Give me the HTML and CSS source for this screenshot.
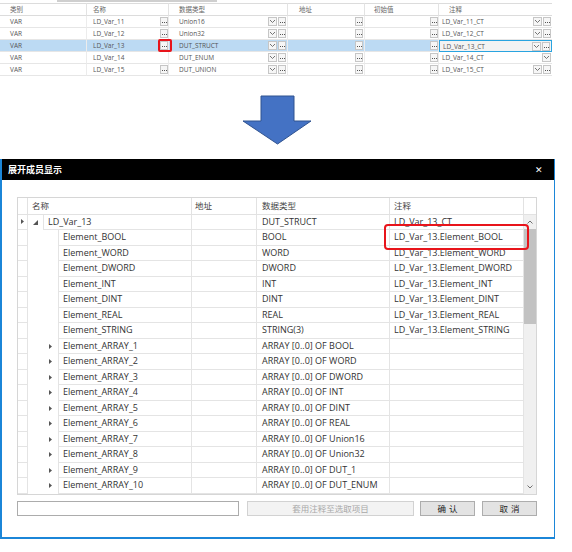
FILE: index.html
```html
<!DOCTYPE html>
<html lang="zh-CN">
<head>
<meta charset="utf-8">
<title>展开成员显示</title>
<link rel="stylesheet" href="styles.css">
</head>
<body>
<div class="hbar"></div>
<div class="tt">
  <div class="th p10">类别</div>
  <div class="th p6">名称</div>
  <div class="th p10">数据类型</div>
  <div class="th p11">地址</div>
  <div class="th p9">初始值</div>
  <div class="th p10 last">注释</div>

  <div class="td p10">VAR</div>
  <div class="td p6"><span class="tx">LD_Var_11</span><span class="dots r0"><i></i><i></i><i></i></span></div>
  <div class="td p10"><span class="tx">Union16</span><span class="dd"><svg width="5" height="3" viewBox="0 0 5 3"><polyline points="0,0 2.5,2.5 5,0"/></svg></span><span class="dots r1"><i></i><i></i><i></i></span></div>
  <div class="td"><span class="dots r1"><i></i><i></i><i></i></span></div>
  <div class="td"><span class="dots r0"><i></i><i></i><i></i></span></div>
  <div class="td p3 last"><span class="tx">LD_Var_11_CT</span><span class="dd"><svg width="5" height="3" viewBox="0 0 5 3"><polyline points="0,0 2.5,2.5 5,0"/></svg></span><span class="dots r1"><i></i><i></i><i></i></span></div>

  <div class="td p10">VAR</div>
  <div class="td p6"><span class="tx">LD_Var_12</span><span class="dots r0"><i></i><i></i><i></i></span></div>
  <div class="td p10"><span class="tx">Union32</span><span class="dd"><svg width="5" height="3" viewBox="0 0 5 3"><polyline points="0,0 2.5,2.5 5,0"/></svg></span><span class="dots r1"><i></i><i></i><i></i></span></div>
  <div class="td"><span class="dots r1"><i></i><i></i><i></i></span></div>
  <div class="td"><span class="dots r0"><i></i><i></i><i></i></span></div>
  <div class="td p3 last"><span class="tx">LD_Var_12_CT</span><span class="dd"><svg width="5" height="3" viewBox="0 0 5 3"><polyline points="0,0 2.5,2.5 5,0"/></svg></span><span class="dots r1"><i></i><i></i><i></i></span></div>

  <div class="td sel p10">VAR</div>
  <div class="td sel p6 rel"><span class="tx">LD_Var_13</span><span class="dots r0"><i></i><i></i><i></i></span><span class="redmark"></span></div>
  <div class="td sel p10"><span class="tx">DUT_STRUCT</span><span class="dd"><svg width="5" height="3" viewBox="0 0 5 3"><polyline points="0,0 2.5,2.5 5,0"/></svg></span><span class="dots r1"><i></i><i></i><i></i></span></div>
  <div class="td sel"><span class="dots r1"><i></i><i></i><i></i></span></div>
  <div class="td sel"><span class="dots r0"><i></i><i></i><i></i></span></div>
  <div class="td p3 last focus"><span class="tx">LD_Var_13_CT</span><span class="dd"><svg width="5" height="3" viewBox="0 0 5 3"><polyline points="0,0 2.5,2.5 5,0"/></svg></span><span class="dots r1"><i></i><i></i><i></i></span></div>

  <div class="td p10">VAR</div>
  <div class="td p6"><span class="tx">LD_Var_14</span></div>
  <div class="td p10"><span class="tx">DUT_ENUM</span><span class="dd"><svg width="5" height="3" viewBox="0 0 5 3"><polyline points="0,0 2.5,2.5 5,0"/></svg></span><span class="dots r1"><i></i><i></i><i></i></span></div>
  <div class="td"><span class="dots r1"><i></i><i></i><i></i></span></div>
  <div class="td"><span class="dots r0"><i></i><i></i><i></i></span></div>
  <div class="td p3 last"><span class="tx">LD_Var_14_CT</span><span class="dd r1"><svg width="5" height="3" viewBox="0 0 5 3"><polyline points="0,0 2.5,2.5 5,0"/></svg></span></div>

  <div class="td p10">VAR</div>
  <div class="td p6"><span class="tx">LD_Var_15</span><span class="dots r0"><i></i><i></i><i></i></span></div>
  <div class="td p10"><span class="tx">DUT_UNION</span><span class="dd"><svg width="5" height="3" viewBox="0 0 5 3"><polyline points="0,0 2.5,2.5 5,0"/></svg></span><span class="dots r1"><i></i><i></i><i></i></span></div>
  <div class="td"><span class="dots r1"><i></i><i></i><i></i></span></div>
  <div class="td"><span class="dots r0"><i></i><i></i><i></i></span></div>
  <div class="td p3 last"><span class="tx">LD_Var_15_CT</span><span class="dd"><svg width="5" height="3" viewBox="0 0 5 3"><polyline points="0,0 2.5,2.5 5,0"/></svg></span><span class="dots r1"><i></i><i></i><i></i></span></div>
</div>

<div class="arrow-wrap">
  <svg width="70" height="50" viewBox="0 0 70 50"><polygon points="19,1 52,1 52,26 69,26 35.5,49 1,26 19,26" fill="#4472c4" stroke="#2f528f" stroke-width="1"/></svg>
</div>

<div class="dlg">
  <div class="dlg-title"><span>展开成员显示</span><span class="close">✕</span></div>
  <div class="dlg-body">
    <div class="tbl">
      <div class="thead">
        <div class="hc"></div>
        <div class="hc pn">名称</div>
        <div class="hc pa">地址</div>
        <div class="hc pt">数据类型</div>
        <div class="hc pc">注释</div>
        <div class="hc hs"></div>
      </div>
      <div class="tbody">
        <div class="rows">
          <div class="row">
            <div class="rh"><svg class="tri" width="3" height="5" viewBox="0 0 3 5"><polygon points="0,0 3,2.5 0,5"/></svg></div>
            <div class="nm"><div class="ind ip"><svg class="tri" width="5" height="5" viewBox="0 0 5 5"><polygon points="5,0 5,5 0,5"/></svg></div><div class="lb">LD_Var_13</div></div>
            <div class="c"></div><div class="c pt">DUT_STRUCT</div><div class="c pc">LD_Var_13_CT</div>
          </div>
          <div class="row"><div class="rh"></div><div class="nm"><div class="ind"></div><div class="lb">Element_BOOL</div></div><div class="c"></div><div class="c pt">BOOL</div><div class="c pc">LD_Var_13.Element_BOOL</div></div>
          <div class="row"><div class="rh"></div><div class="nm"><div class="ind"></div><div class="lb">Element_WORD</div></div><div class="c"></div><div class="c pt">WORD</div><div class="c pc">LD_Var_13.Element_WORD</div></div>
          <div class="row"><div class="rh"></div><div class="nm"><div class="ind"></div><div class="lb">Element_DWORD</div></div><div class="c"></div><div class="c pt">DWORD</div><div class="c pc">LD_Var_13.Element_DWORD</div></div>
          <div class="row"><div class="rh"></div><div class="nm"><div class="ind"></div><div class="lb">Element_INT</div></div><div class="c"></div><div class="c pt">INT</div><div class="c pc">LD_Var_13.Element_INT</div></div>
          <div class="row"><div class="rh"></div><div class="nm"><div class="ind"></div><div class="lb">Element_DINT</div></div><div class="c"></div><div class="c pt">DINT</div><div class="c pc">LD_Var_13.Element_DINT</div></div>
          <div class="row"><div class="rh"></div><div class="nm"><div class="ind"></div><div class="lb">Element_REAL</div></div><div class="c"></div><div class="c pt">REAL</div><div class="c pc">LD_Var_13.Element_REAL</div></div>
          <div class="row"><div class="rh"></div><div class="nm"><div class="ind"></div><div class="lb">Element_STRING</div></div><div class="c"></div><div class="c pt">STRING(3)</div><div class="c pc">LD_Var_13.Element_STRING</div></div>
          <div class="row"><div class="rh"></div><div class="nm"><div class="ind"><svg class="tri" width="3" height="5" viewBox="0 0 3 5"><polygon points="0,0 3,2.5 0,5"/></svg></div><div class="lb">Element_ARRAY_1</div></div><div class="c"></div><div class="c pt">ARRAY [0..0] OF BOOL</div><div class="c pc"></div></div>
          <div class="row"><div class="rh"></div><div class="nm"><div class="ind"><svg class="tri" width="3" height="5" viewBox="0 0 3 5"><polygon points="0,0 3,2.5 0,5"/></svg></div><div class="lb">Element_ARRAY_2</div></div><div class="c"></div><div class="c pt">ARRAY [0..0] OF WORD</div><div class="c pc"></div></div>
          <div class="row"><div class="rh"></div><div class="nm"><div class="ind"><svg class="tri" width="3" height="5" viewBox="0 0 3 5"><polygon points="0,0 3,2.5 0,5"/></svg></div><div class="lb">Element_ARRAY_3</div></div><div class="c"></div><div class="c pt">ARRAY [0..0] OF DWORD</div><div class="c pc"></div></div>
          <div class="row"><div class="rh"></div><div class="nm"><div class="ind"><svg class="tri" width="3" height="5" viewBox="0 0 3 5"><polygon points="0,0 3,2.5 0,5"/></svg></div><div class="lb">Element_ARRAY_4</div></div><div class="c"></div><div class="c pt">ARRAY [0..0] OF INT</div><div class="c pc"></div></div>
          <div class="row"><div class="rh"></div><div class="nm"><div class="ind"><svg class="tri" width="3" height="5" viewBox="0 0 3 5"><polygon points="0,0 3,2.5 0,5"/></svg></div><div class="lb">Element_ARRAY_5</div></div><div class="c"></div><div class="c pt">ARRAY [0..0] OF DINT</div><div class="c pc"></div></div>
          <div class="row"><div class="rh"></div><div class="nm"><div class="ind"><svg class="tri" width="3" height="5" viewBox="0 0 3 5"><polygon points="0,0 3,2.5 0,5"/></svg></div><div class="lb">Element_ARRAY_6</div></div><div class="c"></div><div class="c pt">ARRAY [0..0] OF REAL</div><div class="c pc"></div></div>
          <div class="row"><div class="rh"></div><div class="nm"><div class="ind"><svg class="tri" width="3" height="5" viewBox="0 0 3 5"><polygon points="0,0 3,2.5 0,5"/></svg></div><div class="lb">Element_ARRAY_7</div></div><div class="c"></div><div class="c pt">ARRAY [0..0] OF Union16</div><div class="c pc"></div></div>
          <div class="row"><div class="rh"></div><div class="nm"><div class="ind"><svg class="tri" width="3" height="5" viewBox="0 0 3 5"><polygon points="0,0 3,2.5 0,5"/></svg></div><div class="lb">Element_ARRAY_8</div></div><div class="c"></div><div class="c pt">ARRAY [0..0] OF Union32</div><div class="c pc"></div></div>
          <div class="row"><div class="rh"></div><div class="nm"><div class="ind"><svg class="tri" width="3" height="5" viewBox="0 0 3 5"><polygon points="0,0 3,2.5 0,5"/></svg></div><div class="lb">Element_ARRAY_9</div></div><div class="c"></div><div class="c pt">ARRAY [0..0] OF DUT_1</div><div class="c pc"></div></div>
          <div class="row"><div class="rh"></div><div class="nm"><div class="ind"><svg class="tri" width="3" height="5" viewBox="0 0 3 5"><polygon points="0,0 3,2.5 0,5"/></svg></div><div class="lb">Element_ARRAY_10</div></div><div class="c"></div><div class="c pt">ARRAY [0..0] OF DUT_ENUM</div><div class="c pc"></div></div>
        </div>
        <div class="vs">
          <div class="vbtn"><svg width="6" height="4" viewBox="0 0 6 4"><polyline points="0.5,3.5 3,1 5.5,3.5"/></svg></div>
          <div class="thumb"></div>
          <div class="vfill"></div>
          <div class="vbtn"><svg width="6" height="4" viewBox="0 0 6 4"><polyline points="0.5,0.5 3,3 5.5,0.5"/></svg></div>
        </div>
      </div>
      <div class="hl"></div>
    </div>
    <div class="bar">
      <div class="inp"></div>
      <div class="btn dis b1">套用注释至选取项目</div>
      <div class="btn b2">确认</div>
      <div class="btn b3">取消</div>
    </div>
  </div>
</div>
</body>
</html>
```
FILE: styles.css
```css
* { box-sizing: border-box; }
body {
  margin: 0;
  background: #fff;
  font-family: "Open Sans", "Noto Sans CJK SC", sans-serif;
  color: #333;
  width: 572px;
  height: 552px;
  overflow: hidden;
}
.hbar {
  margin-left: 57px;
  width: 160px;
  height: 2px;
  background: #cfcfcf;
  margin-bottom: 1px;
}
.tt {
  display: grid;
  grid-template-columns: 87px 82px 119px 77px 74px 113px;
  width: 552px;
  font-size: 6.5px;
  color: #555;
}
.th {
  height: 13px;
  border-top: 1px solid #dcdcdc;
  border-bottom: 1px solid #dcdcdc;
  border-right: 1px solid #e3e3e3;
  line-height: 11px;
  font-family: "Noto Sans CJK SC", sans-serif;
  color: #666;
}
.td {
  height: 12px;
  border-bottom: 1px solid #e6e6e6;
  border-right: 1px solid #ececec;
  display: flex;
  align-items: center;
  line-height: 11px;
}
.last { border-right: none; }
.p3 { padding-left: 3px; }
.p6 { padding-left: 6px; }
.p9 { padding-left: 9px; }
.p10 { padding-left: 10px; }
.p11 { padding-left: 11px; }
.tx { flex: 1; white-space: nowrap; }
.sel { background: #bcdaf3; }
.focus { border: 1px solid #2aa4e0; background: #f3f3f3; }
.rel { position: relative; }
.dots, .dd {
  height: 9px;
  border: 1px solid #c6c6c6;
  background: #f6f6f6;
  display: flex;
  align-items: center;
  justify-content: center;
  gap: 1px;
  flex: none;
}
.td > .dots:first-child { margin-left: auto; }
.dots { width: 8px; }
.dots i { width: 1px; height: 1px; background: #555; display: block; margin-top: 2px; }
.dd { width: 9px; margin-right: 1px; }
.dd svg polyline { fill: none; stroke: #666; stroke-width: 0.9; }
.r0 { margin-right: 0; }
.r1 { margin-right: 1px; }
.redmark {
  position: absolute;
  left: 71px;
  top: -1px;
  width: 14px;
  height: 13px;
  border: 2px solid #e8141b;
  border-radius: 2px;
}
.arrow-wrap {
  margin-top: 19px;
  padding-left: 242px;
  height: 50px;
}
.arrow-wrap svg { display: block; }
.dlg {
  margin-top: 14px;
  width: 555px;
  border-left: 2px solid #1b86d8;
  border-right: 1px solid #1b86d8;
  border-bottom: 2px solid #1b86d8;
  background: #fff;
}
.dlg-title {
  height: 21px;
  background: #000;
  color: #fff;
  font-family: "Noto Sans CJK SC", sans-serif;
  font-weight: bold;
  font-size: 9px;
  display: flex;
  align-items: center;
  justify-content: space-between;
  padding: 0 11px 0 6px;
}
.close { font-size: 9px; font-weight: normal; }
.dlg-body { padding: 17px 0 21px 15px; }
.tbl {
  position: relative;
  width: 520px;
  border: 1px solid #d6d6d6;
  font-size: 9px;
  color: #333;
}
.thead {
  display: grid;
  grid-template-columns: 10px 164px 65px 133px 134px 12px;
  height: 16.5px;
}
.hc {
  border-right: 1px solid #e2e2e2;
  border-bottom: 1px solid #e2e2e2;
  line-height: 15px;
  color: #444;
  font-family: "Noto Sans CJK SC", sans-serif;
  font-size: 8.5px;
}
.hs { border-right: none; }
.pn { padding-left: 4px; }
.pa { padding-left: 3px; }
.pt { padding-left: 5px; }
.pc { padding-left: 4px; }
.tbody { display: flex; }
.rows { width: 506px; }
.row {
  display: grid;
  grid-template-columns: 10px 164px 65px 133px 134px;
  height: 15.5px;
}
.rh, .c {
  border-right: 1px solid #e4e4e4;
  border-bottom: 1px solid #e4e4e4;
  line-height: 14.5px;
  white-space: nowrap;
  overflow: hidden;
}
.rh { display: flex; align-items: center; justify-content: center; }
.nm { display: flex; border-right: 1px solid #e4e4e4; }
.ind {
  width: 30px;
  flex: none;
  display: flex;
  align-items: center;
  justify-content: flex-end;
  padding-right: 6px;
}
.ind.ip { width: 15px; padding-right: 5px; }
.lb {
  flex: 1;
  border-left: 1px solid #e4e4e4;
  border-bottom: 1px solid #e4e4e4;
  padding-left: 4px;
  line-height: 14.5px;
  white-space: nowrap;
}
.tri { display: block; fill: #555; }
.vs {
  width: 12px;
  background: #f0f0f0;
  display: flex;
  flex-direction: column;
}
.vbtn {
  height: 14px;
  display: flex;
  align-items: center;
  justify-content: center;
}
.vbtn svg polyline { fill: none; stroke: #707070; stroke-width: 1; }
.thumb { height: 95px; background: #c2c2c2; }
.vfill { flex: 1; }
.hl {
  position: absolute;
  left: 366px;
  top: 26px;
  width: 145px;
  height: 26px;
  border: 2.5px solid #e8141b;
  border-radius: 4px;
}
.bar {
  display: flex;
  margin-top: 6px;
  height: 15px;
}
.inp {
  width: 222px;
  border: 1px solid #acacac;
  background: #fff;
}
.btn {
  border: 1px solid #adadad;
  background: #e3e3e3;
  font-family: "Noto Sans CJK SC", sans-serif;
  font-size: 8.5px;
  line-height: 13px;
  text-align: center;
  color: #222;
}
.dis { background: #f3f3f3; border-color: #d2d2d2; color: #a8a8a8; }
.b1 { width: 167px; margin-left: 8px; }
.b2 { width: 55px; margin-left: 6px; letter-spacing: 3px; text-indent: 3px; }
.b3 { width: 55px; margin-left: 7px; letter-spacing: 3px; text-indent: 3px; }
```
